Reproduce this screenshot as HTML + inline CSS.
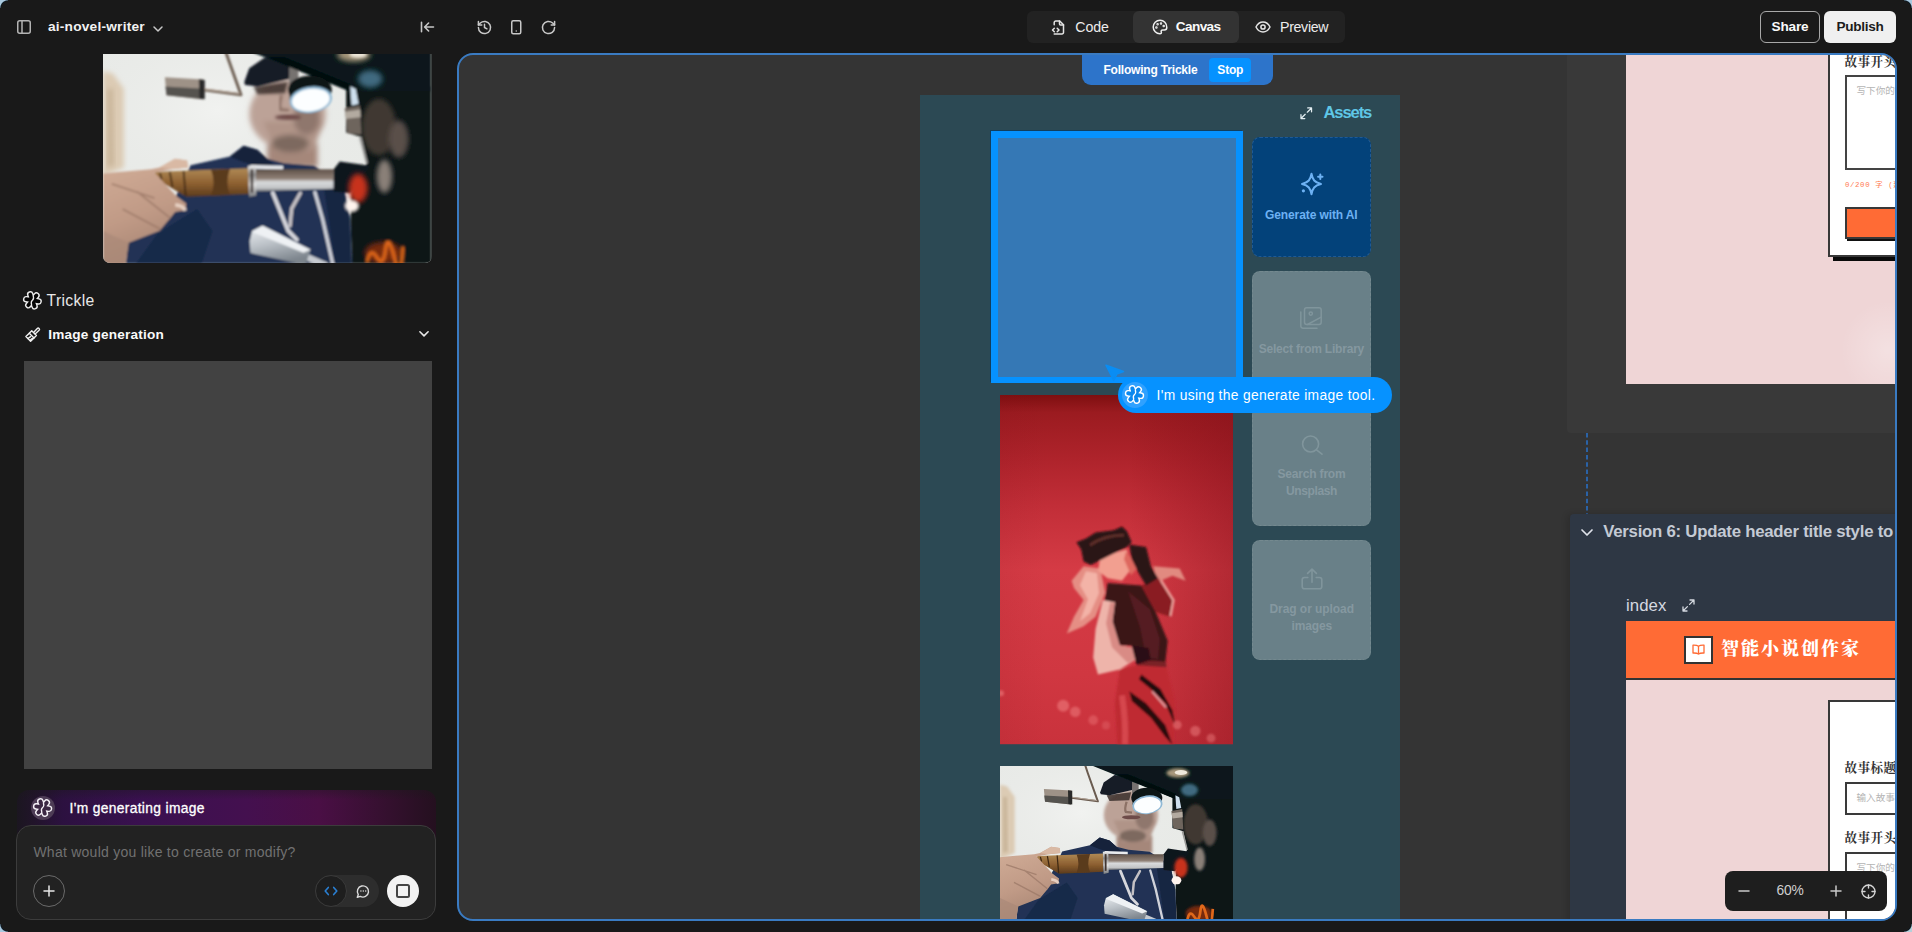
<!DOCTYPE html>
<html lang="en">
<head>
<meta charset="utf-8">
<title>ai-novel-writer</title>
<style>
*{box-sizing:border-box;margin:0;padding:0}
html,body{width:1912px;height:932px;overflow:hidden;background:#191919;font-family:"Liberation Sans","Noto Sans CJK SC",sans-serif;color:#fff}
.abs{position:absolute}
svg{display:block;overflow:visible}
.ic{fill:none;stroke:#c8c8c8;stroke-width:1.5;stroke-linecap:round;stroke-linejoin:round}
#app{position:absolute;left:0;top:0;width:1912px;height:932px;background:#191919;overflow:hidden}
.t{position:absolute;white-space:nowrap;line-height:1}
#canvas{position:absolute;left:457px;top:53px;width:1440px;height:868px;border:2px solid #3a7bc2;border-radius:16px;background:#343434;overflow:hidden}
#cin{position:absolute;left:-459px;top:-55px;width:1912px;height:932px}
</style>
</head>
<body>
<div id="app">
<svg width="0" height="0" style="position:absolute">
<defs>
<filter id="b1" x="-5%" y="-5%" width="110%" height="110%"><feGaussianBlur stdDeviation="0.9"/></filter>
<filter id="b2" x="-20%" y="-20%" width="140%" height="140%"><feGaussianBlur stdDeviation="2.2"/></filter>
<filter id="b3" x="-30%" y="-30%" width="160%" height="160%"><feGaussianBlur stdDeviation="4"/></filter>
<linearGradient id="gwood" x1="0" y1="0" x2="0" y2="1"><stop offset="0" stop-color="#b08a55"/><stop offset=".55" stop-color="#8c5f30"/><stop offset="1" stop-color="#5a3a1c"/></linearGradient>
<linearGradient id="gtube" x1="0" y1="0" x2="0" y2="1"><stop offset="0" stop-color="#5f5148"/><stop offset=".42" stop-color="#8f8076"/><stop offset=".58" stop-color="#d8dadc"/><stop offset=".85" stop-color="#c2c4c6"/><stop offset="1" stop-color="#6e7074"/></linearGradient>
<linearGradient id="gcol" x1="0" y1="0" x2="0" y2="1"><stop offset="0" stop-color="#f2f2f2"/><stop offset=".3" stop-color="#8c8c8c"/><stop offset=".6" stop-color="#e8e8e8"/><stop offset="1" stop-color="#77797c"/></linearGradient>
<linearGradient id="gcyl" x1="0" y1="0" x2=".35" y2="1"><stop offset="0" stop-color="#f0f3f6"/><stop offset=".5" stop-color="#bcc2c8"/><stop offset="1" stop-color="#7d858d"/></linearGradient>
<linearGradient id="gbg" x1="0" y1="0" x2="1" y2="0"><stop offset="0" stop-color="#d9d2c6"/><stop offset=".06" stop-color="#dcd6cc"/><stop offset=".1" stop-color="#e6e5e1"/><stop offset="1" stop-color="#eeeeec"/></linearGradient>
<radialGradient id="gbg2" cx=".35" cy=".3" r=".6"><stop offset="0" stop-color="#f1f2f0" stop-opacity="1"/><stop offset="1" stop-color="#e3e5e2" stop-opacity="0"/></radialGradient>
<linearGradient id="ghand" x1="0" y1="0" x2=".3" y2="1"><stop offset="0" stop-color="#d2ae98"/><stop offset=".6" stop-color="#c09a86"/><stop offset="1" stop-color="#a88674"/></linearGradient>
<symbol id="man" viewBox="0 0 300 200" preserveAspectRatio="none">
<rect width="300" height="200" fill="#e9ebe8"/>
<rect width="300" height="200" fill="url(#gbg2)"/>
<!-- door frame -->
<path d="M0 24L9 26 19 40 19 112 0 120z" fill="#dccbb4" filter="url(#b2)"/>
<path d="M4 40L9 40 10 110 4 112z" fill="#c9b59a" filter="url(#b2)"/>
<g filter="url(#b1)">
<!-- roller + rod -->
<path d="M92 41L126 45.500 113 9 109 -3" stroke="#6a5b50" stroke-width="2.600" fill="none" stroke-linejoin="round"/>
<path d="M92 40.200L125 44.500" stroke="#b5a698" stroke-width="1.200" fill="none"/>
<path d="M56.500 29.500L92 31.500 91.500 49.500 58 46z" fill="#9e9287"/>
<path d="M57 38L92 40 91.500 49.500 58 46z" fill="#55524f"/>
<path d="M87.500 31.200L93 32 93 49.500 88 49z" fill="#2c2c2a"/>
<!-- ear/face -->
<g filter="url(#b2)">
<rect x="150" y="90" width="46" height="22" fill="#a5877a"/>
<ellipse cx="168.600" cy="63" rx="35" ry="32" fill="#bca297"/>
<path d="M146 70L202 70 192 96 158 98z" fill="#b09488"/>
<ellipse cx="171" cy="90" rx="17" ry="8" fill="#7d695f"/>
<ellipse cx="186" cy="66" rx="12" ry="16" fill="#8f776d"/>
</g>
<ellipse cx="169" cy="66" rx="12" ry="2.600" fill="#6e4b49" filter="url(#b1)"/>
<path d="M163 46q-3 10-1 13l8 1" stroke="#8c7166" stroke-width="3" fill="none" filter="url(#b1)"/>
<!-- glasses -->
<path d="M137.300 37.600L168.800 33.900 166.400 44 141 45.200z" fill="#3a2f2c" opacity=".85" filter="url(#b1)"/>
<!-- cap -->
<path d="M129 33.900L133.500 21.200 147.400 11.600 168.800 14.500 172 22.500 170 31 141 37.600 129.700 36.500z" fill="#171c28"/>
<!-- lamp stem -->
<rect x="170" y="20" width="8.500" height="30" fill="#76726f"/>
<!-- right machine base -->
<path d="M222 38L222 80 236 84 241 108 227 135 226 160 227.500 200 300 200 300 38z" fill="#0b1416"/>
<path d="M119.800 0L225.600 42.500 300 42.500 300 0z" fill="#07181a"/>
<path d="M150 11L226 42.500 226 36 165 11z" fill="#030a0c"/>
<!-- lamp -->
<ellipse cx="189" cy="41" rx="20" ry="13" fill="#0c1417"/>
<ellipse cx="189.800" cy="50" rx="19.500" ry="12" fill="#8fb9d6" transform="rotate(-8 189.800 50)"/>
<ellipse cx="189.800" cy="50.300" rx="17.300" ry="10.200" fill="#fcfeff" transform="rotate(-8 189.800 50.300)"/>
<!-- top lights -->
<ellipse cx="229" cy="9" rx="15" ry="6" fill="#a8987c" filter="url(#b2)"/>
<ellipse cx="233" cy="8.500" rx="8" ry="3.200" fill="#efe9dc" filter="url(#b1)"/>
<ellipse cx="244" cy="31" rx="11" ry="8" fill="#3f6b80" filter="url(#b2)"/>
<!-- machine bits -->
<ellipse cx="252" cy="75" rx="16" ry="26" fill="#403730" filter="url(#b2)"/>
<ellipse cx="270" cy="86" rx="9" ry="17" fill="#5a5048" filter="url(#b2)"/>
<ellipse cx="257" cy="120" rx="7" ry="15" fill="#8a8078" filter="url(#b2)"/>
<path d="M225.800 37.600L230.800 40.200 233.400 54 227 55.300z" fill="#cfe0ee"/>
<path d="M220.700 57.900L234.600 55.300 235.900 81.900 223.300 80.600z" fill="#6e655d"/>
<path d="M221 61L235 59 235.300 66 222 67.500z" fill="#b3aaa0"/>
<path d="M235 84L241 108" stroke="#9a9a98" stroke-width="2" fill="none"/>
<!-- hoodie -->
<path d="M20.900 200L23 177.800 57.500 156.200 74.800 121.800 80 110 115.800 102 128.400 92 141 95.800 150 104 165.300 108 192.700 110.300 219.300 127.600 225.600 158.900 227.200 200z" fill="#203354"/>
<path d="M115.800 102L128.400 92 141 95.800 152 106 172 124 150 113 128 107z" fill="#15203a"/>
<path d="M30 200L50 172 86 150 100 170 90 200z" fill="#19294a"/>
<path d="M200 118L219.300 127.600 225.600 158.900 227.200 200 212 200z" fill="#182642"/>
<!-- strings -->
<path d="M155.100 135.400L169.200 169.900 177 178" stroke="#d6d6dc" stroke-width="3.600" fill="none" stroke-linecap="round"/>
<path d="M180.200 135.400L172.300 149.500 170.800 165.200" stroke="#c4c0c4" stroke-width="3.200" fill="none" stroke-linecap="round"/>
<path d="M193.500 134.600L200.500 158.900 209.900 200.400" stroke="#d0d2da" stroke-width="3" fill="none" stroke-linecap="round"/>
<!-- wood -->
<path d="M49 115.800L133.200 112.700 133.200 136.200 76 138.800 58 128 45 122q-1-5 4-6.200z" fill="url(#gwood)"/>
<path d="M52 117L53.500 123M61 116L63.500 130M73.600 115.200L75.500 138" stroke="#3e2812" stroke-width="1.600" fill="none"/>
<path d="M98.700 114q4.500 11.500 0 23.800l17.200-.8q-4.500-10.800 0-23.600z" fill="#5a3a1e"/>
<!-- tube -->
<path d="M137.900 113.500L210.700 113.500 210.700 131.500 137.900 133.800z" fill="url(#gtube)"/>
<path d="M134.700 109.600L164.500 110.400 164.500 113.600 134.700 113z" fill="#e9ebee"/>
<path d="M132.400 110.500L139.500 110 140 137.500 133.500 139z" fill="url(#gcol)"/>
<path d="M136 113.500L136 135" stroke="#3f3530" stroke-width="2.400"/>
<!-- tip -->
<path d="M210.700 113.500L216.200 106.400 244.400 110.300 225.600 135.400 210.700 133.800z" fill="#0f151d"/>
<!-- glow -->
<ellipse cx="233" cy="131" rx="8.500" ry="13" fill="#c8301c" filter="url(#b2)"/>
<ellipse cx="227.200" cy="147.200" rx="6.300" ry="5.200" fill="#fff4ee" filter="url(#b1)"/>
<ellipse cx="256" cy="190" rx="17" ry="10" fill="#a5350e" opacity=".7" filter="url(#b2)"/>
<path d="M241 199q3-15 9-5t8-7t8 7t8-10" stroke="#e0681a" stroke-width="3.500" fill="none" filter="url(#b1)"/>
<!-- hand -->
<path d="M0 117.400L9.400 116.600 43.900 113.500 51.700 112 65.800 104 76.800 105.600 77.600 111.900 62.700 113.500 47 116.600 67.400 138.500 76 144.800 75.200 151 65.800 152.700 61 158.900 59.500 160.500 51.700 169.900 23.500 180.800 20.400 200.400 0 200.400z" fill="url(#ghand)"/>
<path d="M51.700 112L65.800 104 76.800 105.600 77.600 111.900 62.700 113.500z" fill="#d9b9a4"/>
<path d="M31 134L61 158M18 150L52 168M8 127L47 140" stroke="#9b7867" stroke-width="1.800" fill="none" opacity=".75"/>
<path d="M66 146q8 1 9 5.500" stroke="#f0dace" stroke-width="3.400" fill="none" opacity=".85"/>
<path d="M0 170L23.500 180.800 20.400 200.400 0 200.400z" fill="#a98978" opacity=".7"/>
<!-- bottom cylinder -->
<path d="M184.900 193.400L204 201.500" stroke="#c6cad0" stroke-width="6"/>
<path d="M136.300 169.900L145.700 165.200 189.600 187.100 184.900 201 134.700 190.200 133.900 179.300z" fill="url(#gcyl)"/>
<path d="M136.300 171L145.700 165.200 189.600 187.100 183 190z" fill="#eef1f4"/>
</g>
</symbol>
<linearGradient id="gred" x1="0" y1="0" x2="0" y2="1"><stop offset="0" stop-color="#7e0f10"/><stop offset=".05" stop-color="#9b1b20"/><stop offset=".18" stop-color="#ae232b"/><stop offset=".32" stop-color="#c22e38"/><stop offset=".5" stop-color="#d53b45"/><stop offset=".8" stop-color="#d03741"/><stop offset="1" stop-color="#c9323c"/></linearGradient>
<linearGradient id="gred2" x1="0" y1="0" x2="1" y2="0"><stop offset="0" stop-color="#7a0c16" stop-opacity=".08"/><stop offset=".2" stop-color="#7a0c16" stop-opacity="0"/><stop offset=".55" stop-color="#7a0c16" stop-opacity="0"/><stop offset="1" stop-color="#7a0c16" stop-opacity=".38"/></linearGradient>
<symbol id="redgirl" viewBox="0 0 233 349" preserveAspectRatio="none">
<rect width="233" height="349" fill="url(#gred)"/>
<rect width="233" height="349" fill="url(#gred2)"/>
<g filter="url(#b1)">
<!-- hair back -->
<path d="M83.600 171L100.400 173.400 105.200 197.500 95.600 221.500 83.600 231 66.800 238.300 74 221.500 83.600 204.700 74 192.700 71.600 185.500z" fill="#e58e84"/>
<path d="M86 176L97 178 99 198 90 218 80 226 88 204 80 190z" fill="#f3b3a7"/>
<path d="M153.300 171L179.700 173.400 185.700 185.500 172.500 180.600 160.500 185.500 155.700 180.600z" fill="#e18a80"/>
<!-- legs -->
<path d="M119.700 274.300L138.900 269.500 166.500 271.900 174.900 308 173.700 349.300 117.300 349.300 114.800 308z" fill="#bf2a33"/>
<path d="M122 300q4 26 3 49" stroke="#e2565e" stroke-width="6" fill="none" opacity=".65"/>
<path d="M141.300 279.200L160.500 293.600 172.500 315.200 174.900 329.600 165.300 308 150.900 293.600 138.900 284z" fill="#1e080b"/>
<path d="M129.300 296L146.100 308 165.300 329.600 172.500 349.300 165.300 341.600 150.900 322.400 131.700 305.600z" fill="#260a0e"/>
<path d="M152 296L166 312" stroke="#f2c8c8" stroke-width="1.600" fill="none" opacity=".8"/>
<!-- right sleeve -->
<path d="M141.300 190.300L158.100 183 172.500 204.700 170.100 221.500 155.700 216.700z" fill="#8a1c23"/>
<path d="M161 185L173.500 205 170.500 221" stroke="#f0a7a0" stroke-width="2.200" fill="none"/>
<!-- jacket -->
<path d="M107.600 187.900L141.300 190.300 155.700 216.700 167.700 245.500 165.300 267.100 138.900 264.700 131.700 250.300 114.800 250.300 102.800 216.700z" fill="#3a1418"/>
<path d="M128 196L150 214 160 244 158 264 146 262 140 232z" fill="#551b20"/>
<path d="M136 264L166 266.500 166.500 272 137 270z" fill="#7a2026"/>
<!-- left sleeve -->
<path d="M102.800 204.700L114.800 207.100 112.400 226.300 119.700 250.300 134.100 252.700 138.900 262.300 119.700 274.300 98 279.200 93.200 262.300 95.600 233.500z" fill="#eeb4aa"/>
<path d="M110 208L114.800 207.100 112.400 226.300 119.700 250.300 134.100 252.700 138.900 262.300 128 268 112 252 106 228z" fill="#d98b85"/>
<path d="M131.700 250.300L148.500 252.700 150.900 264.700 136.500 269.500z" fill="#2a1014"/>
<!-- face -->
<path d="M100.400 161.400L126.900 154.200 131.700 173.400 122 185.500 107.600 183 98 175.800z" fill="#f29f90"/>
<path d="M126 156L138 172 131 180 124 164z" fill="#de675f"/>
<!-- arm / phone -->
<path d="M129.300 149.400L146.100 151.800 150.900 171 158.100 183 146.100 190.300 138.900 178.200 131.700 163.800z" fill="#2a1216"/>
<!-- hat -->
<path d="M76.400 147L86 143.400 95.600 137.400 113.700 135 122 131.400 126.900 136.200 131.700 147 126.900 151.800 107.600 161.400 90.800 169.800 83.600 166.200 81.200 154.200z" fill="#2a1214"/>
<path d="M90 150q14-10 34-10" stroke="#61302c" stroke-width="2.600" fill="none"/>
</g>
<g fill="#f58a8a" filter="url(#b1)"><circle cx="63.200" cy="310.400" r="6" opacity=".5"/><circle cx="75.200" cy="316.400" r="5.300" opacity=".45"/><circle cx="93.200" cy="324.800" r="4.800" opacity=".35"/><circle cx="177.300" cy="329.600" r="4.400" opacity=".45"/><circle cx="195.300" cy="335.600" r="5.200" opacity=".45"/><circle cx="211" cy="342.800" r="4.400" opacity=".4"/><circle cx="1" cy="298" r="3" opacity=".5"/><circle cx="106" cy="330" r="4" opacity=".25"/></g>
</symbol>
</defs>
</svg>
<!-- window corners -->
<div class="abs" style="left:0;top:0;width:8px;height:8px;background:radial-gradient(circle at 8px 8px,#191919 6.400px,#0b1822 7.200px,#a9c9df 8.200px)"></div>
<div class="abs" style="left:1904px;top:0;width:8px;height:8px;background:radial-gradient(circle at 0 8px,#191919 6.400px,#0b1822 7.200px,#a9c9df 8.200px)"></div>
<div class="abs" style="left:0;top:924px;width:8px;height:8px;background:radial-gradient(circle at 8px 0,#191919 6.400px,#0b1822 7.200px,#a9c9df 8.200px)"></div>
<div class="abs" style="left:1904px;top:924px;width:8px;height:8px;background:radial-gradient(circle at 0 0,#191919 6.400px,#0b1822 7.200px,#b5d0da 8.200px)"></div>
<!-- sidebar icon -->
<svg class="abs ic" style="left:17px;top:20px;stroke:#b4b4b4" width="14" height="14" viewBox="0 0 14 14"><rect x=".75" y=".75" width="12.5" height="12.5" rx="2"/><path d="M5 .75v12.5"/></svg>
<div class="t" style="left:48px;top:20px;font-size:13.7px;font-weight:700;color:#f2f2f2;letter-spacing:0.216px;">ai-novel-writer</div>
<svg class="abs ic" style="left:152.500px;top:25.500px" width="10" height="6" viewBox="0 0 10 6"><path d="M1 1l4 4 4-4"/></svg>
<!-- collapse -->
<svg class="abs ic" style="left:420.400px;top:20px;stroke-width:1.600" width="15" height="14" viewBox="0 0 15 14"><path d="M1.500 2.200v9.600M13.500 7H5M8.600 3L4.600 7 8.600 11"/></svg>
<!-- history -->
<svg class="abs ic" style="left:476.500px;top:19.500px;stroke-width:1.600" width="15" height="15" viewBox="0 0 16 16"><path d="M1.5 8A6.5 6.5 0 1 0 3.6 3.2L1.5 5.2"/><path d="M1.5 1.6v3.6h3.6"/><path d="M8 4.6V8l2.6 1.4"/></svg>
<!-- phone -->
<svg class="abs ic" style="left:510.800px;top:19.800px" width="10.500" height="14.400" viewBox="0 0 10.500 14.400"><rect x=".75" y=".75" width="9" height="12.900" rx="1.500"/><path d="M5.250 10.900h.01"/></svg>
<!-- refresh -->
<svg class="abs ic" style="left:540.800px;top:19.500px;stroke-width:1.600" width="15" height="15" viewBox="0 0 16 16"><path d="M14.5 8A6.5 6.5 0 1 1 12.4 3.2L14.5 5.2"/><path d="M14.5 1.6v3.6h-3.6"/></svg>
<!-- tabs -->
<div class="abs" style="left:1027px;top:11px;width:318px;height:32px;background:#222222;border-radius:6px"></div>
<div class="abs" style="left:1133px;top:11px;width:106px;height:32px;background:#333333;border-radius:6px"></div>
<svg class="abs ic" style="left:1051px;top:20px;stroke:#e4e4e4" width="14" height="15" viewBox="0 0 14 15"><path d="M3.2 14H11a1.5 1.5 0 0 0 1.5-1.500V4.800L8.700 1H4.700a1.500 1.500 0 0 0-1.500 1.500v2.200"/><path d="M8.500 1v3a1 1 0 0 0 1 1h3"/><path d="M3.300 8.200L1.500 10l1.800 1.800M6.200 8.200L8 10l-1.800 1.800"/></svg>
<div class="t" style="left:1075.3px;top:19.5px;font-size:14.2px;font-weight:400;color:#ececec;letter-spacing:-0.080px;">Code</div>
<svg class="abs ic" style="left:1152px;top:19px;stroke:#f0f0f0" width="16" height="16" viewBox="0 0 16 16"><path d="M8 1.200a6.800 6.800 0 0 0 0 13.600c1.100 0 1.700-.8 1.300-1.700-.5-1.100.1-2.200 1.400-2.200h1.600a2.500 2.500 0 0 0 2.500-2.500C14.800 4.100 11.800 1.200 8 1.200z"/><circle cx="9" cy="4.400" r=".5"/><circle cx="11.700" cy="7" r=".5"/><circle cx="5.600" cy="5.200" r=".5"/><circle cx="4.400" cy="8.400" r=".5"/></svg>
<div class="t" style="left:1175.7px;top:19.5px;font-size:13.6px;font-weight:700;color:#fafafa;letter-spacing:-0.579px;">Canvas</div>
<svg class="abs ic" style="left:1255px;top:21px;stroke:#e4e4e4" width="16" height="12" viewBox="0 0 16 12"><path d="M1 6s2.500-5 7-5 7 5 7 5-2.500 5-7 5-7-5-7-5z"/><circle cx="8" cy="6" r="2.100"/></svg>
<div class="t" style="left:1280px;top:19.5px;font-size:14.2px;font-weight:400;color:#ececec;letter-spacing:-0.324px;">Preview</div>
<!-- share/publish -->
<div class="abs" style="left:1760px;top:11px;width:60px;height:32px;border:1px solid #a8a8a8;border-radius:6px"></div>
<div class="t" style="left:1771.5px;top:19.5px;font-size:13.6px;font-weight:700;color:#fafafa;letter-spacing:-0.156px;">Share</div>
<div class="abs" style="left:1824px;top:11px;width:72px;height:32px;background:#f0f0f0;border-radius:6px"></div>
<div class="t" style="left:1836.5px;top:19.5px;font-size:13.6px;font-weight:700;color:#1c1c1c;letter-spacing:-0.299px;">Publish</div>
<!-- photo in chat -->
<div class="abs" style="left:103px;top:54px;width:328.500px;height:209.400px;overflow:hidden;border-radius:0 0 7px 7px">
<svg class="abs" style="left:0;top:-9.400px" width="328.500" height="218.800"><use href="#man" width="328.500" height="218.800"/></svg>
</div>
<!-- Trickle -->
<svg class="abs" style="left:22.500px;top:289.600px" width="18.800" height="20.700" viewBox="0 0 20 22" fill="none" stroke-linecap="round">
<g stroke="#ececec" stroke-width="7"><path d="M7.700 4.700L12.300 17.300M14.300 5.900L5.700 16.100M16.600 12.200L3.400 9.800"/></g>
<g stroke="#050505" stroke-width="4"><path d="M7.700 4.700L12.300 17.300M14.300 5.900L5.700 16.100M16.600 12.200L3.400 9.800"/></g>
<path d="M10.900 6.300Q11.900 9.600 10 11T9.100 15.700" stroke="#ececec" stroke-width="1.400" fill="none"/>
</svg>
<div class="t" style="left:46.6px;top:292.8px;font-size:15.7px;font-weight:400;color:#e8e8e8;letter-spacing:0.327px;">Trickle</div>
<svg class="abs ic" style="left:25px;top:326.500px;stroke:#f0f0f0;stroke-width:1.400" width="15" height="15" viewBox="0 0 15 15"><path d="M8.800 5.200L12.300 1.500a1.250 1.250 0 0 1 1.800 1.800L10.400 6.800"/><path d="M6.700 3.800L11.400 8.500 9 10.900 4.300 6.200z"/><path d="M4.300 6.200L.9 9.600 5.600 14.300 9 10.900"/><path d="M3 11.500L5.500 9.600M5 13.400L7.400 11.400"/></svg>
<div class="t" style="left:48.2px;top:327.5px;font-size:13.6px;font-weight:700;color:#fafafa;letter-spacing:0.202px;">Image generation</div>
<svg class="abs ic" style="left:419px;top:331px;stroke:#e6e6e6;stroke-width:1.600" width="10" height="6" viewBox="0 0 10 6"><path d="M.9.800L5 4.900 9.100.800"/></svg>
<div class="abs" style="left:24px;top:361px;width:408px;height:408px;background:#424242"></div>
<!-- generating banner -->
<div class="abs" style="left:17px;top:790px;width:419px;height:50px;border-radius:12px 12px 0 0;background:linear-gradient(90deg,#1b1620 0%,#21142a 4%,#2c1140 11%,#3a1050 30%,#44104f 55%,#4a0f45 72%,#35102f 88%,#24101f 100%)"></div>
<div class="abs" style="left:17px;top:790px;width:419px;height:50px;border-radius:12px 12px 0 0;background:linear-gradient(180deg,rgba(25,25,25,.35) 0,rgba(25,25,25,0) 10px)"></div>
<div class="abs" style="left:31px;top:796px;width:24px;height:24px;border-radius:12px;background:#4d3c55"></div>
<svg class="abs" style="left:33.400px;top:797.400px" width="19.200" height="21.100" viewBox="0 0 20 22" fill="none" stroke-linecap="round">
<g stroke="#f4f0f6" stroke-width="7"><path d="M7.700 4.700L12.300 17.300M14.300 5.900L5.700 16.100M16.600 12.200L3.400 9.800"/></g>
<g stroke="#3b2743" stroke-width="4.100"><path d="M7.700 4.700L12.300 17.300M14.300 5.900L5.700 16.100M16.600 12.200L3.400 9.800"/></g>
<path d="M10.900 6.300Q11.900 9.600 10 11T9.100 15.700" stroke="#f4f0f6" stroke-width="1.400" fill="none"/>
</svg>
<div class="t" style="left:69.5px;top:802px;font-size:13.8px;font-weight:400;color:#ffffff;letter-spacing:0.344px;-webkit-text-stroke:.3px #fff">I'm generating image</div>
<!-- input -->
<div class="abs" style="left:16px;top:825px;width:420px;height:95px;border-radius:15px;background:#222222;border:1px solid #3c3c3c"></div>
<div class="t" style="left:33.4px;top:845px;font-size:14px;font-weight:400;color:#717171;letter-spacing:0.252px;">What would you like to create or modify?</div>
<div class="abs" style="left:33px;top:875px;width:32px;height:32px;border-radius:16px;border:1px solid #6a6a6a"></div>
<svg class="abs ic" style="left:43px;top:885px;stroke:#e8e8e8;stroke-width:1.500" width="12" height="12" viewBox="0 0 12 12"><path d="M6 1v10M1 6h10"/></svg>
<div class="abs" style="left:315px;top:875px;width:64px;height:32px;border-radius:16px;background:#2d2d2d"></div>
<div class="abs" style="left:315px;top:875px;width:32px;height:32px;border-radius:16px;background:#1e1e1e;border:1px solid #3a3a3a"></div>
<svg class="abs ic" style="left:324px;top:886px;stroke:#2a7fd2;stroke-width:1.600" width="14" height="10" viewBox="0 0 14 10"><path d="M4.300 1.400L1.200 5 4.300 8.600M9.700 1.400L12.800 5 9.700 8.600"/></svg>
<svg class="abs ic" style="left:356px;top:883.800px;stroke:#dcdcdc;stroke-width:1.400" width="14" height="14" viewBox="0 0 14 14"><path d="M2.300 10.600A5.600 5.600 0 1 1 4.300 12.400L1.300 13.200z"/><path d="M4.900 7h.01M7.300 7h.01M9.700 7h.01" stroke-width="1.500"/></svg>
<div class="abs" style="left:387px;top:875px;width:32px;height:32px;border-radius:16px;background:#f3f3f3"></div>
<div class="abs" style="left:396.300px;top:884.200px;width:13.400px;height:13.400px;border:2px solid #454545;border-radius:2.500px"></div>
<div id="canvas"><div id="cin">
<!-- right gray panel -->
<div class="abs" style="left:1567px;top:40px;width:345px;height:393px;background:#393939;border-radius:0 0 0 4px"></div>
<div class="abs" style="left:1626px;top:40px;width:286px;height:344px;background:#efd5d6"></div>
<div class="abs" style="left:1840px;top:300px;width:80px;height:84px;background:radial-gradient(ellipse at 60% 60%,rgba(255,255,255,.28),rgba(255,255,255,0) 70%)"></div>
<!-- white card top -->
<div class="abs" style="left:1832.500px;top:40px;width:90px;height:221px;background:#0a0a0a"></div>
<div class="abs" style="left:1828px;top:30px;width:90px;height:226.700px;background:#fff;border:2px solid #383838"></div>
<div class="t" style="left:1844.500px;top:55.600px;font-size:12.600px;font-weight:700;color:#333;font-family:'Liberation Serif','Noto Serif CJK SC',serif;letter-spacing:.4px">故事开头</div>
<div class="abs" style="left:1845px;top:75px;width:80px;height:95px;background:#fff;border:2px solid #444"></div>
<div class="t" style="left:1856.500px;top:85.500px;font-size:9.600px;color:#b4b4b4">写下你的故事</div>
<div class="t" style="left:1845px;top:181.500px;font-size:7.400px;font-weight:400;color:#ff7a52;font-family:'Liberation Mono','Noto Sans CJK SC',monospace;letter-spacing:.6px">0/200 字 (建议)</div>
<div class="abs" style="left:1847px;top:209px;width:80px;height:32px;background:#111"></div>
<div class="abs" style="left:1845px;top:207px;width:80px;height:32px;background:#ff6b35;border:2px solid #383838"></div>
<!-- dashed connector -->
<svg class="abs" style="left:1585px;top:433px" width="4" height="81"><path d="M2 0V81" stroke="#2a62a6" stroke-width="2" stroke-dasharray="4.500 2.800" fill="none"/></svg>
<!-- version panel -->
<div class="abs" style="left:1570px;top:514px;width:342px;height:418px;background:#2e3744;border-radius:4px 0 0 0;box-shadow:-3px 0 6px rgba(0,0,0,.14)"></div>
<svg class="abs ic" style="left:1581px;top:529px;stroke:#dfe3ea;stroke-width:1.700" width="12" height="7" viewBox="0 0 12 7"><path d="M1 1l5 5 5-5"/></svg>
<div class="t" style="left:1603.2px;top:523.5px;font-size:16.8px;font-weight:700;color:#c4cad4;letter-spacing:-0.245px;">Version 6: Update header title style to</div>
<div class="t" style="left:1626px;top:597.5px;font-size:16.8px;font-weight:400;color:#d5d9e0;letter-spacing:0.055px;">index</div>
<svg class="abs ic" style="left:1682px;top:599px;stroke:#d5d9e0;stroke-width:1.300" width="13" height="13" viewBox="0 0 13 13"><path d="M8 1h4v4M12 1L7.600 5.400M5 12H1V8M1 12l4.400-4.400"/></svg>
<!-- orange header -->
<div class="abs" style="left:1626px;top:621px;width:290px;height:59px;background:#ff6b35;border-bottom:2px solid #333"></div>
<div class="abs" style="left:1684px;top:636px;width:28.500px;height:28px;background:#fff;border:2px solid #333"></div>
<svg class="abs" style="left:1691.500px;top:644px;fill:none;stroke:#ff6b35;stroke-width:1.300;stroke-linejoin:round" width="13" height="11" viewBox="0 0 13 11"><path d="M6.500 2.200C5.300 1.200 3.400 1 1 1.100V9c2.400-.1 4.300.1 5.500 1.100C7.700 9.100 9.600 8.900 12 9V1.100C9.600 1 7.700 1.200 6.500 2.200zM6.500 2.200v7.900"/></svg>
<div class="t" style="left:1721px;top:639.800px;font-size:18px;font-weight:900;color:#fff;font-family:'Liberation Serif','Noto Serif CJK SC',serif;letter-spacing:2px">智能小说创作家</div>
<div class="abs" style="left:1626px;top:680px;width:290px;height:260px;background:#efd5d6"></div>
<!-- white card bottom -->
<div class="abs" style="left:1828px;top:700px;width:90px;height:240px;background:#fff;border:2px solid #383838"></div>
<div class="t" style="left:1844.500px;top:761.800px;font-size:12.600px;font-weight:700;color:#333;font-family:'Liberation Serif','Noto Serif CJK SC',serif;letter-spacing:.4px">故事标题</div>
<div class="abs" style="left:1845px;top:782px;width:80px;height:33px;background:#fff;border:2px solid #3a3a3a"></div>
<div class="t" style="left:1856.500px;top:793px;font-size:9.600px;color:#b4b4b4">输入故事标题</div>
<div class="t" style="left:1844.500px;top:832.300px;font-size:12.600px;font-weight:700;color:#333;font-family:'Liberation Serif','Noto Serif CJK SC',serif;letter-spacing:.4px">故事开头</div>
<div class="abs" style="left:1845px;top:852px;width:80px;height:90px;background:#fff;border:2px solid #3a3a3a"></div>
<div class="t" style="left:1856.500px;top:862.500px;font-size:9.600px;color:#b4b4b4">写下你的故事</div>
<!-- zoom control -->
<div class="abs" style="left:1725px;top:871px;width:162px;height:40px;background:#1e1e1e;border-radius:8px"></div>
<svg class="abs ic" style="left:1738px;top:885px;stroke:#c9c9c9;stroke-width:1.500" width="12" height="12" viewBox="0 0 12 12"><path d="M1 6h10"/></svg>
<div class="t" style="left:1776.5px;top:884px;font-size:13.8px;font-weight:400;color:#cfcfcf;letter-spacing:-0.208px;">60%</div>
<svg class="abs ic" style="left:1830px;top:885px;stroke:#c9c9c9;stroke-width:1.500" width="12" height="12" viewBox="0 0 12 12"><path d="M6 1v10M1 6h10"/></svg>
<svg class="abs ic" style="left:1860.500px;top:883.500px;stroke:#d4d4d4;stroke-width:1.400" width="15" height="15" viewBox="0 0 15 15"><circle cx="7.500" cy="7.500" r="6.500"/><path d="M7.500 1v3M7.500 11v3M1 7.500h3M11 7.500h3"/></svg>
<!-- assets panel -->
<div class="abs" style="left:920px;top:95px;width:480px;height:840px;background:#2c4954"></div>
<svg class="abs ic" style="left:1300px;top:107px;stroke:#e3eef2;stroke-width:1.300" width="12.500" height="12.500" viewBox="0 0 13 13"><path d="M8 1h4v4M12 1L7.600 5.400M5 12H1V8M1 12l4.400-4.400"/></svg>
<div class="t" style="left:1323.4px;top:105px;font-size:16.6px;font-weight:700;color:#5fc6e6;letter-spacing:-1.106px;">Assets</div>
<!-- selected box -->
<div class="abs" style="left:991px;top:131px;width:252px;height:252px;background:#0692ff;box-shadow:-1px -1px 0 0 rgba(6,60,100,.7)"></div>
<div class="abs" style="left:997.700px;top:138.400px;width:238.600px;height:238.600px;background:#3578b5"></div>
<!-- cards -->
<div class="abs" style="left:1252px;top:137px;width:119.200px;height:120px;background:#03427a;border:1px dashed #1f5a96;border-radius:8px"></div>
<svg class="abs" style="left:1299.500px;top:172px;fill:none;stroke:#6db1f3;stroke-width:2;stroke-linejoin:round;stroke-linecap:round" width="24" height="24" viewBox="0 0 24 24"><path d="M11.500 1.800c1.100 5.900 2.900 8.600 9.500 10.200-6.600 1.600-8.400 4.300-9.500 10.200C10.400 16.300 8.600 13.600 2 12c6.600-1.600 8.400-4.300 9.500-10.200z"/><path d="M20.300 2.600v4.400M18.100 4.800h4.400"/><circle cx="3.400" cy="18.800" r="1.600" fill="#6db1f3" stroke="none"/></svg>
<div class="t" style="left:1265px;top:209px;font-size:12px;font-weight:700;color:#6db1f3;letter-spacing:-0.103px;">Generate with AI</div>
<div class="abs" style="left:1252px;top:271.200px;width:119.200px;height:120px;background:#698088;border:1px dashed #74898f;border-radius:8px"></div>
<svg class="abs" style="left:1300px;top:307px;fill:none;stroke:#80959c;stroke-width:1.500;stroke-linejoin:round;stroke-linecap:round" width="22" height="22" viewBox="0 0 22 22"><rect x="4.500" y=".800" width="16.700" height="16.700" rx="2.200"/><path d="M17 21.200H3A2.200 2.200 0 0 1 .800 19V5"/><circle cx="10.800" cy="6.600" r="1.600"/><path d="M21.200 10.200L7.500 17.500"/></svg>
<div class="t" style="left:1258.7px;top:342.5px;font-size:12px;font-weight:700;color:#8598a0;letter-spacing:-0.209px;">Select from Library</div>
<div class="abs" style="left:1252px;top:405.600px;width:119.200px;height:120px;background:#698088;border:1px dashed #74898f;border-radius:8px"></div>
<svg class="abs" style="left:1300.500px;top:434.500px;fill:none;stroke:#80959c;stroke-width:1.600;stroke-linecap:round" width="22" height="20" viewBox="0 0 22 20"><circle cx="9.600" cy="9" r="8"/><path d="M15.500 14.800l5.500 4.400"/></svg>
<div class="t" style="left:1277.5px;top:468px;font-size:12px;font-weight:700;color:#8598a0;letter-spacing:-0.185px;">Search from</div>
<div class="t" style="left:1286px;top:484.7px;font-size:12px;font-weight:700;color:#8598a0;letter-spacing:-0.377px;">Unsplash</div>
<div class="abs" style="left:1252px;top:540px;width:119.200px;height:120px;background:#698088;border:1px dashed #74898f;border-radius:8px"></div>
<svg class="abs" style="left:1300.500px;top:568px;fill:none;stroke:#80959c;stroke-width:1.600;stroke-linecap:round;stroke-linejoin:round" width="22" height="22" viewBox="0 0 22 22"><path d="M11 1.200v13M6.600 5.400L11 1.200l4.400 4.200"/><path d="M6.800 9.500H3.500A2.300 2.300 0 0 0 1.200 11.800v6.600a2.300 2.300 0 0 0 2.300 2.300h15a2.300 2.300 0 0 0 2.300-2.300v-6.600a2.300 2.300 0 0 0-2.300-2.300h-3.300"/></svg>
<div class="t" style="left:1269.5px;top:603.2px;font-size:12px;font-weight:700;color:#8598a0;letter-spacing:-0.060px;">Drag or upload</div>
<div class="t" style="left:1291.5px;top:620px;font-size:12px;font-weight:700;color:#8598a0;letter-spacing:-0.143px;">images</div>
<!--PHOTOS-->
<svg class="abs" style="left:1000.400px;top:394.600px" width="233" height="349.400"><use href="#redgirl" width="233" height="349.400"/></svg>
<svg class="abs" style="left:1000.400px;top:766px" width="233" height="155.300"><use href="#man" width="233" height="155.300"/></svg>
<!-- cursor -->
<svg class="abs" style="left:1104px;top:363px" width="22" height="20" viewBox="0 0 22 20"><path d="M2 2.200L19.500 8.500 12.800 11 9.800 17.400z" fill="#0a8df3" stroke="#0a8df3" stroke-width="1.600" stroke-linejoin="round"/></svg>
<!-- tooltip -->
<div class="abs" style="left:1117.500px;top:377.200px;width:274.500px;height:35.400px;border-radius:18px;background:#0692ff"></div>
<div class="abs" style="left:1122px;top:382.300px;width:26px;height:26px;border-radius:13px;background:#2fa1ff"></div>
<svg class="abs" style="left:1125px;top:384.300px" width="19" height="21" viewBox="0 0 20 22" fill="none" stroke-linecap="round">
<g stroke="#ffffff" stroke-width="7.200"><path d="M7.700 4.700L12.300 17.300M14.300 5.900L5.700 16.100M16.600 12.200L3.400 9.800"/></g>
<g stroke="#0b88ee" stroke-width="4.300"><path d="M7.700 4.700L12.300 17.300M14.300 5.900L5.700 16.100M16.600 12.200L3.400 9.800"/></g>
<path d="M10.900 6.300Q11.900 9.600 10 11T9.100 15.700" stroke="#fff" stroke-width="1.400" fill="none"/>
</svg>
<div class="t" style="left:1156.6px;top:389.2px;font-size:13.8px;font-weight:400;color:#ffffff;letter-spacing:0.335px;">I'm using the generate image tool.</div>
<!-- following pill -->
<div class="abs" style="left:1081.500px;top:50px;width:191px;height:35px;border-radius:0 0 9px 9px;background:#2d74ca"></div>
<div class="t" style="left:1103.4px;top:63.5px;font-size:12px;font-weight:700;color:#ffffff;letter-spacing:-0.192px;">Following Trickle</div>
<div class="abs" style="left:1209px;top:58.200px;width:42px;height:23.600px;border-radius:4px;background:#0692ff"></div>
<div class="t" style="left:1217.3px;top:63.5px;font-size:12px;font-weight:700;color:#ffffff;letter-spacing:-0.168px;">Stop</div>
</div></div>
</div>
</body>
</html>
